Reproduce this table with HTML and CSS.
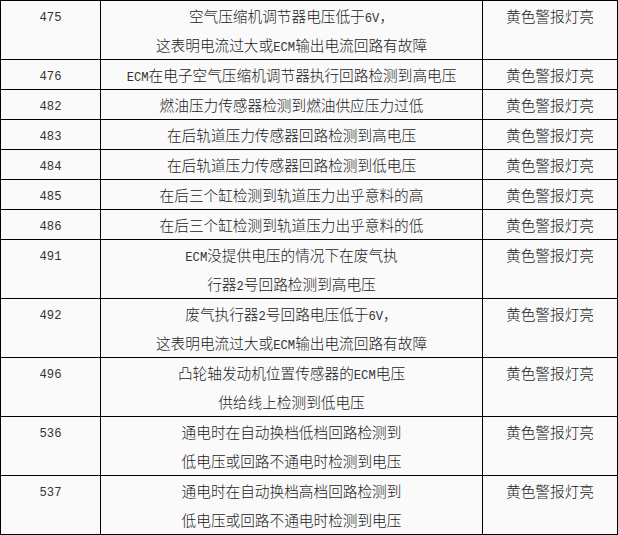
FILE: index.html
```html
<!DOCTYPE html>
<html lang="zh-CN">
<head>
<meta charset="utf-8">
<title>故障代码表</title>
<link rel="stylesheet" href="styles.css">
</head>
<body>
<table class="codes">
  <colgroup>
    <col class="c-code">
    <col class="c-desc">
    <col class="c-lamp">
  </colgroup>
  <tbody>
    <tr><td class="lat num">475</td><td>空气压缩机调节器电压低于<span class="lat">6V</span>，<br>这表明电流过大或<span class="lat">ECM</span>输出电流回路有故障</td><td>黄色警报灯亮</td></tr>
    <tr><td class="lat num">476</td><td><span class="lat">ECM</span>在电子空气压缩机调节器执行回路检测到高电压</td><td>黄色警报灯亮</td></tr>
    <tr><td class="lat num">482</td><td>燃油压力传感器检测到燃油供应压力过低</td><td>黄色警报灯亮</td></tr>
    <tr><td class="lat num">483</td><td>在后轨道压力传感器回路检测到高电压</td><td>黄色警报灯亮</td></tr>
    <tr><td class="lat num">484</td><td>在后轨道压力传感器回路检测到低电压</td><td>黄色警报灯亮</td></tr>
    <tr><td class="lat num">485</td><td>在后三个缸检测到轨道压力出乎意料的高</td><td>黄色警报灯亮</td></tr>
    <tr><td class="lat num">486</td><td>在后三个缸检测到轨道压力出乎意料的低</td><td>黄色警报灯亮</td></tr>
    <tr><td class="lat num">491</td><td><span class="lat">ECM</span>没提供电压的情况下在废气执<br>行器<span class="lat">2</span>号回路检测到高电压</td><td>黄色警报灯亮</td></tr>
    <tr><td class="lat num">492</td><td>废气执行器<span class="lat">2</span>号回路电压低于<span class="lat">6V</span>，<br>这表明电流过大或<span class="lat">ECM</span>输出电流回路有故障</td><td>黄色警报灯亮</td></tr>
    <tr><td class="lat num">496</td><td>凸轮轴发动机位置传感器的<span class="lat">ECM</span>电压<br>供给线上检测到低电压</td><td>黄色警报灯亮</td></tr>
    <tr><td class="lat num">536</td><td>通电时在自动换档低档回路检测到<br>低电压或回路不通电时检测到电压</td><td>黄色警报灯亮</td></tr>
    <tr><td class="lat num">537</td><td>通电时在自动换档高档回路检测到<br>低电压或回路不通电时检测到电压</td><td>黄色警报灯亮</td></tr>
  </tbody>
</table>
</body>
</html>
```
FILE: styles.css
```css
html, body {
  margin: 0;
  padding: 0;
  background: #fafafa;
}

.codes {
  border-collapse: collapse;
  table-layout: fixed;
  width: 617px;
  font-family: "Noto Sans CJK SC", "Liberation Sans", sans-serif;
  font-size: 14.67px;
  font-weight: 300;
  color: #1a1a1a;
}

.c-code { width: 100px; }
.c-desc { width: 382px; }
.c-lamp { width: 135px; }

.codes td {
  border: 1px solid #000;
  padding: 0;
  height: 29px;
  line-height: 29px;
  text-align: center;
  vertical-align: top;
  white-space: nowrap;
}

.codes .lat {
  font-family: "Liberation Mono", "DejaVu Sans Mono", monospace;
  font-size: 12.2px;
  font-weight: 400;
  color: #333;
}

.codes span.lat {
  line-height: 1;
}

.codes td.num {
  padding-top: 5px;
  height: 24px;
  line-height: 24px;
}
```
